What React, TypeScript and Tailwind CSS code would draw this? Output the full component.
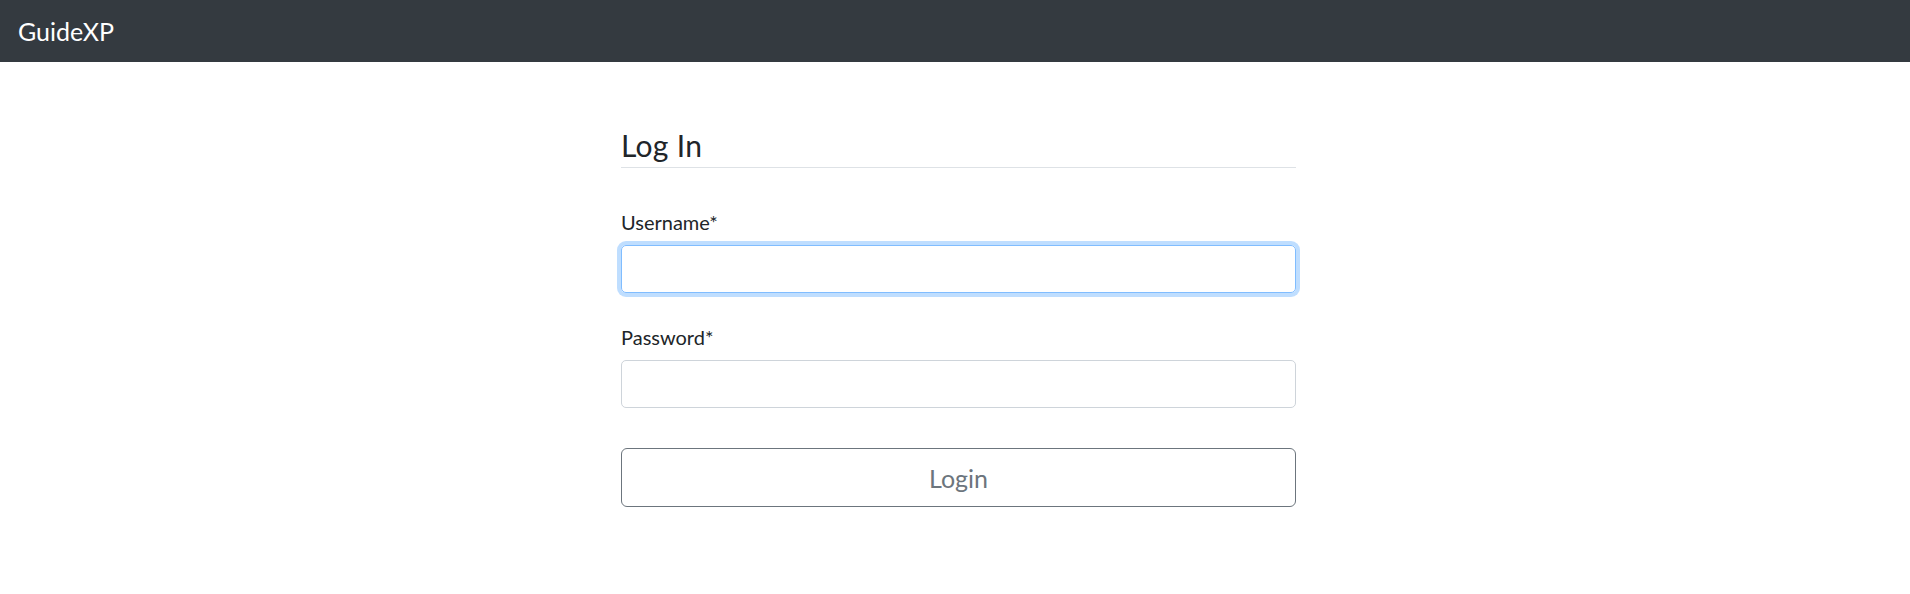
export default function App() {
  return (
    <div className="min-h-[594px] bg-white font-['Lato','Open_Sans',sans-serif] text-[#212529]">
      <nav className="flex h-[62px] items-center bg-[#343a40] px-[18px]">
        <span className="text-[25px] leading-none text-white">GuideXP</span>
      </nav>

      <main className="flex justify-center pl-[7px]">
        <form className="w-[675px]" onSubmit={(e) => e.preventDefault()}>
          <h3 className="mt-[65px] border-b border-[#dee2e6] pb-[4px] text-[30px] leading-[36px] tracking-[0.3px]">Log In</h3>

          <div className="mt-[39px]">
            <label htmlFor="username" className="block text-[20px] leading-[30px]">
              Username*
            </label>
            <input
              id="username"
              type="text"
              autoFocus
              className="mt-[8px] block h-[48px] w-full rounded-[5px] border border-[#80bdff] px-[15px] text-[20px] shadow-[0_0_0_4px_rgba(0,123,255,0.25)] outline-none"
            />
          </div>

          <div className="mt-[29px]">
            <label htmlFor="password" className="block text-[20px] leading-[30px]">
              Password*
            </label>
            <input
              id="password"
              type="password"
              className="mt-[8px] block h-[48px] w-full rounded-[5px] border border-[#ced4da] px-[15px] text-[20px] outline-none"
            />
          </div>

          <button
            type="submit"
            className="mt-[40px] block h-[59px] w-full rounded-[6px] border border-[#6c757d] pt-[2px] text-[25px] text-[#6c757d]"
          >
            Login
          </button>
        </form>
      </main>
    </div>
  );
}
